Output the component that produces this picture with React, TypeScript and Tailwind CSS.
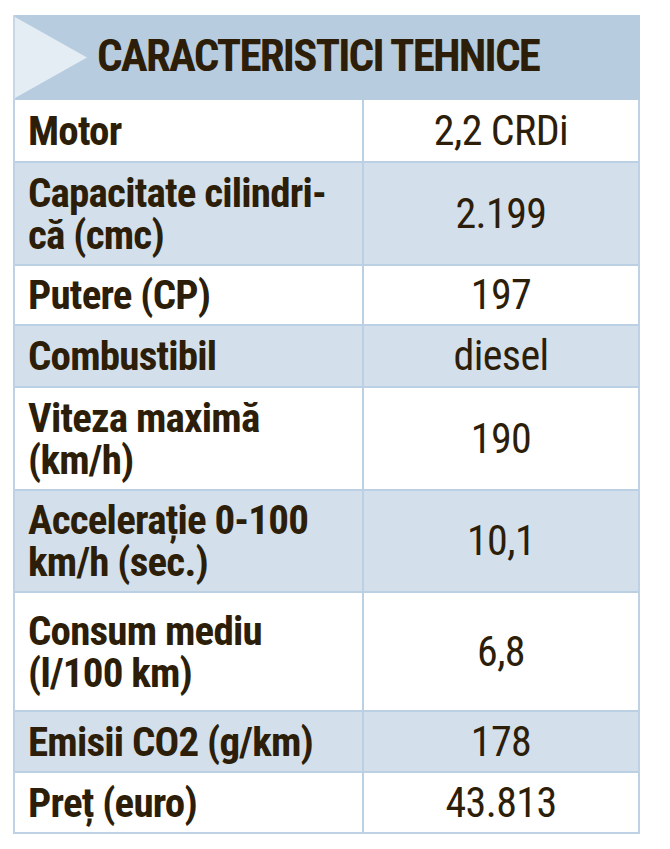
const rows = [
  { label: ["Motor"], value: "2,2 CRDi", h: "h-[61px]", alt: false },
  { label: ["Capacitate cilindri-", "că (cmc)"], value: "2.199", h: "h-[103px]", alt: true },
  { label: ["Putere (CP)"], value: "197", h: "h-[60px]", alt: false },
  { label: ["Combustibil"], value: "diesel", h: "h-[62px]", alt: true },
  { label: ["Viteza maximă", "(km/h)"], value: "190", h: "h-[103px]", alt: false },
  { label: ["Accelerație 0-100", "km/h (sec.)"], value: "10,1", h: "h-[102px]", alt: true },
  { label: ["Consum mediu", "(l/100 km)"], value: "6,8", h: "h-[119px]", alt: false },
  { label: ["Emisii CO2 (g/km)"], value: "178", h: "h-[61px]", alt: true },
  { label: ["Preț (euro)"], value: "43.813", h: "h-[61px]", alt: false },
]

export default function App() {
  return (
    <div className="w-[670px] h-[849px] bg-white pt-[15px] pl-[13px] font-['Roboto_Condensed',sans-serif] text-[#2c1e08]">
      <div className="w-[627px]">
        {/* Header */}
        <div className="relative h-[85px] bg-[#b8cce0] flex items-center pl-[82px] pb-[4px] border-l-2 border-[#c8d7e7]">
          <svg className="absolute left-0 top-[2px]" width="72" height="81" viewBox="0 0 72 81">
            <polygon points="0,0 72,40.5 0,81" fill="#e4ecf4" />
          </svg>
          <h2 className="text-[45px] font-bold leading-none tracking-[-1.8px]">CARACTERISTICI TEHNICE</h2>
        </div>

        {/* Rows */}
        <div className="border-x-2 border-b-2 border-[#bfd2e5]">
          {rows.map((r, i) => (
            <div
              key={i}
              className={`flex ${r.h} ${i > 0 ? "border-t-2" : ""} border-[#bcd0e3] ${r.alt ? "bg-[#d3e0ec]" : "bg-white"}`}
            >
              <div className="w-[349px] shrink-0 border-r-2 border-[#bcd0e3] pl-[13px] flex items-center">
                <p className="text-[41px] font-bold leading-[42px] tracking-[-0.8px]">
                  {r.label.map((l, j) => (
                    <span key={l}>
                      {j > 0 && <br />}
                      {l}
                    </span>
                  ))}
                </p>
              </div>
              <div className="flex-1 flex items-center justify-center text-[42px] leading-none tracking-[-0.6px]">
                {r.value}
              </div>
            </div>
          ))}
        </div>
      </div>
    </div>
  )
}
